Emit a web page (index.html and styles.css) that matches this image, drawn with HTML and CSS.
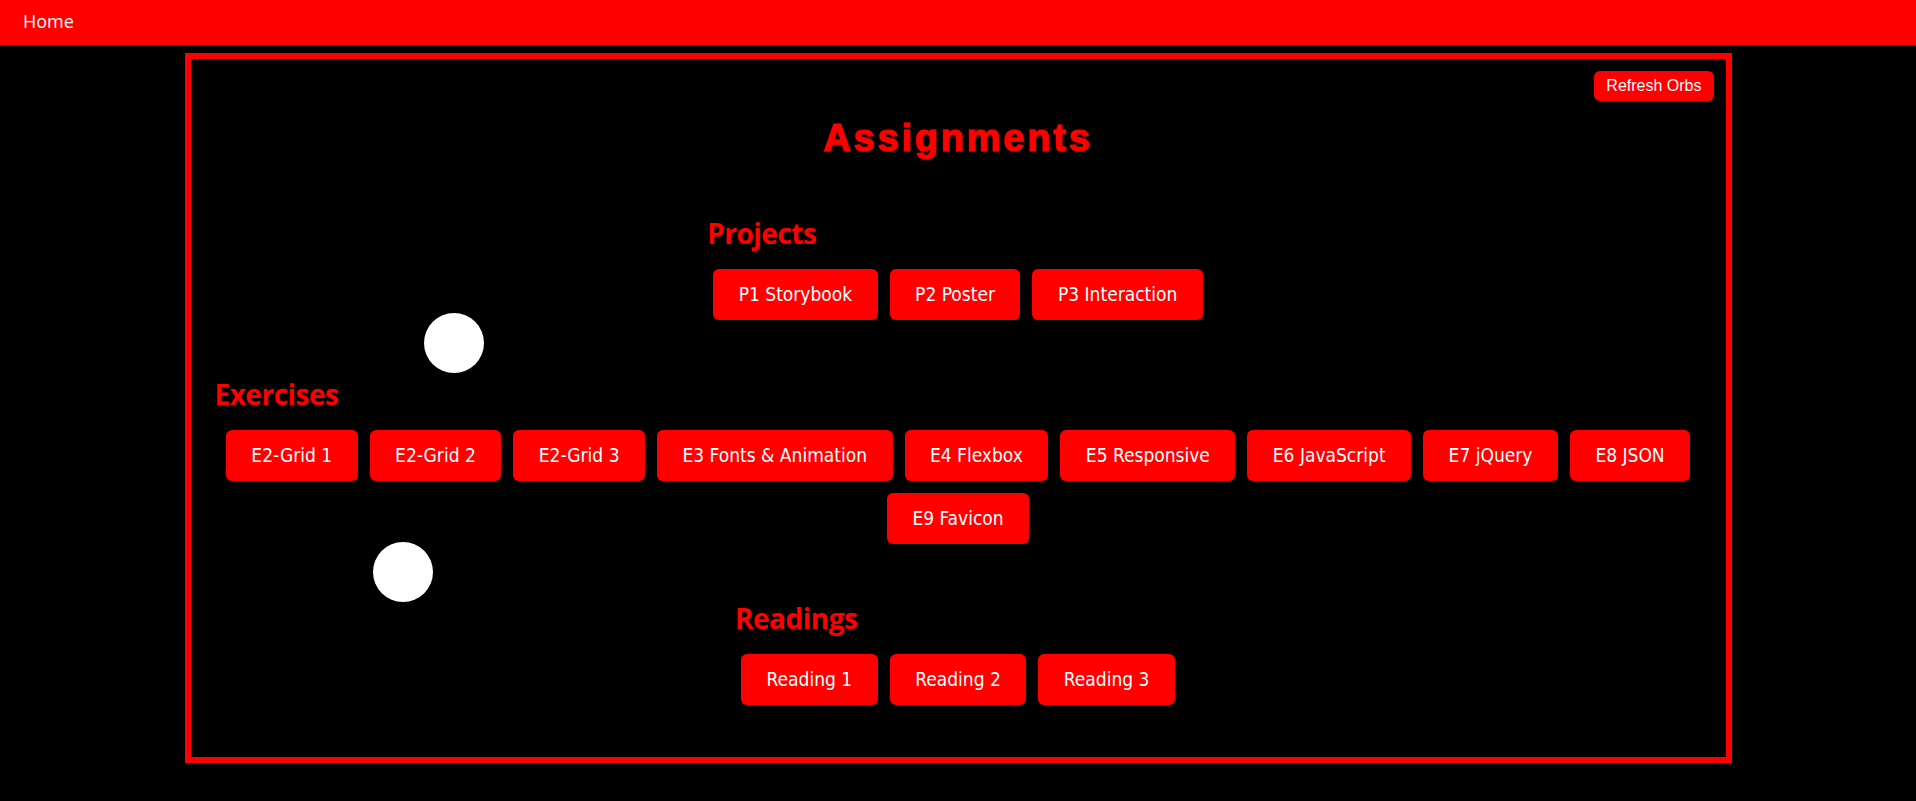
FILE: index.html
```html
<!DOCTYPE html>
<html lang="en">
<head>
<meta charset="utf-8">
<title>Assignments</title>
<link rel="stylesheet" href="styles.css">
</head>
<body>
<header class="topbar">
  <a class="home" href="#">Home</a>
</header>
<main class="frame">
  <button class="refresh" type="button">Refresh Orbs</button>
  <h1 class="title">Assignments</h1>

  <section class="group">
    <h2 class="group-title">Projects</h2>
    <div class="links">
      <a class="link" href="#">P1 Storybook</a>
      <a class="link" href="#">P2 Poster</a>
      <a class="link" href="#">P3 Interaction</a>
    </div>
  </section>

  <section class="group">
    <h2 class="group-title">Exercises</h2>
    <div class="links">
      <a class="link" href="#">E2-Grid 1</a>
      <a class="link" href="#">E2-Grid 2</a>
      <a class="link" href="#">E2-Grid 3</a>
      <a class="link" href="#">E3 Fonts &amp; Animation</a>
      <a class="link" href="#">E4 Flexbox</a>
      <a class="link" href="#">E5 Responsive</a>
      <a class="link" href="#">E6 JavaScript</a>
      <a class="link" href="#">E7 jQuery</a>
      <a class="link" href="#">E8 JSON</a>
      <a class="link" href="#">E9 Favicon</a>
    </div>
  </section>

  <section class="group group-last">
    <h2 class="group-title">Readings</h2>
    <div class="links">
      <a class="link" href="#">Reading 1</a>
      <a class="link" href="#">Reading 2</a>
      <a class="link" href="#">Reading 3</a>
    </div>
  </section>

  <div class="orb orb-a"></div>
  <div class="orb orb-b"></div>
</main>
</body>
</html>
```

FILE: styles.css
```css
html, body {
  margin: 0;
  padding: 0;
  background: #000;
}

body {
  font-family: "DejaVu Sans Condensed", "DejaVu Sans", sans-serif;
  color: #fff;
}

.topbar {
  height: 45px;
  box-sizing: border-box;
  padding: 9px 23px 0;
  background: #ff0000;
}

.home {
  font-family: "Open Sans", sans-serif;
  font-size: 18px;
  line-height: 24px;
  color: #fff;
  text-decoration: none;
}

.frame {
  position: relative;
  box-sizing: border-box;
  width: 1547px;
  margin: 8px auto 0;
  padding: 24px;
  border: 6px solid #ff0000;
}

.refresh {
  position: absolute;
  top: 12px;
  right: 12px;
  margin: 0;
  padding: 6px 12px;
  border: none;
  border-radius: 6px;
  background: #ff0000;
  color: #fff;
  font-family: "Liberation Sans", Arial, sans-serif;
  font-size: 16px;
  line-height: 18px;
}

.title {
  margin: 33px 0 0;
  padding-bottom: 5.5px;
  text-align: center;
  font-family: "Liberation Sans", Arial, sans-serif;
  font-weight: 700;
  font-size: 38px;
  line-height: 44px;
  letter-spacing: 2.8px;
  color: #ff0000;
  -webkit-text-stroke: 1.2px #ff0000;
}

.group {
  width: fit-content;
  margin: 48.5px auto 0;
}

.group-last {
  margin-bottom: 22px;
}

.group-title {
  margin: 0 0 12px;
  padding-top: 1px;
  font-family: "Open Sans", sans-serif;
  font-weight: 700;
  font-size: 28px;
  line-height: 36px;
  letter-spacing: -0.5px;
  color: #ff0000;
}

.links {
  display: flex;
  flex-wrap: wrap;
  justify-content: center;
}

.link {
  margin: 6px;
  padding: 14px 25.5px;
  border-radius: 6px;
  background: #ff0000;
  color: #fff;
  text-decoration: none;
  font-size: 19px;
  line-height: 23.2px;
  white-space: nowrap;
}

.orb {
  position: absolute;
  width: 60px;
  height: 60px;
  border-radius: 50%;
  background: #fff;
}

.orb-a {
  left: 233px;
  top: 254px;
}

.orb-b {
  left: 182px;
  top: 483px;
}
```
